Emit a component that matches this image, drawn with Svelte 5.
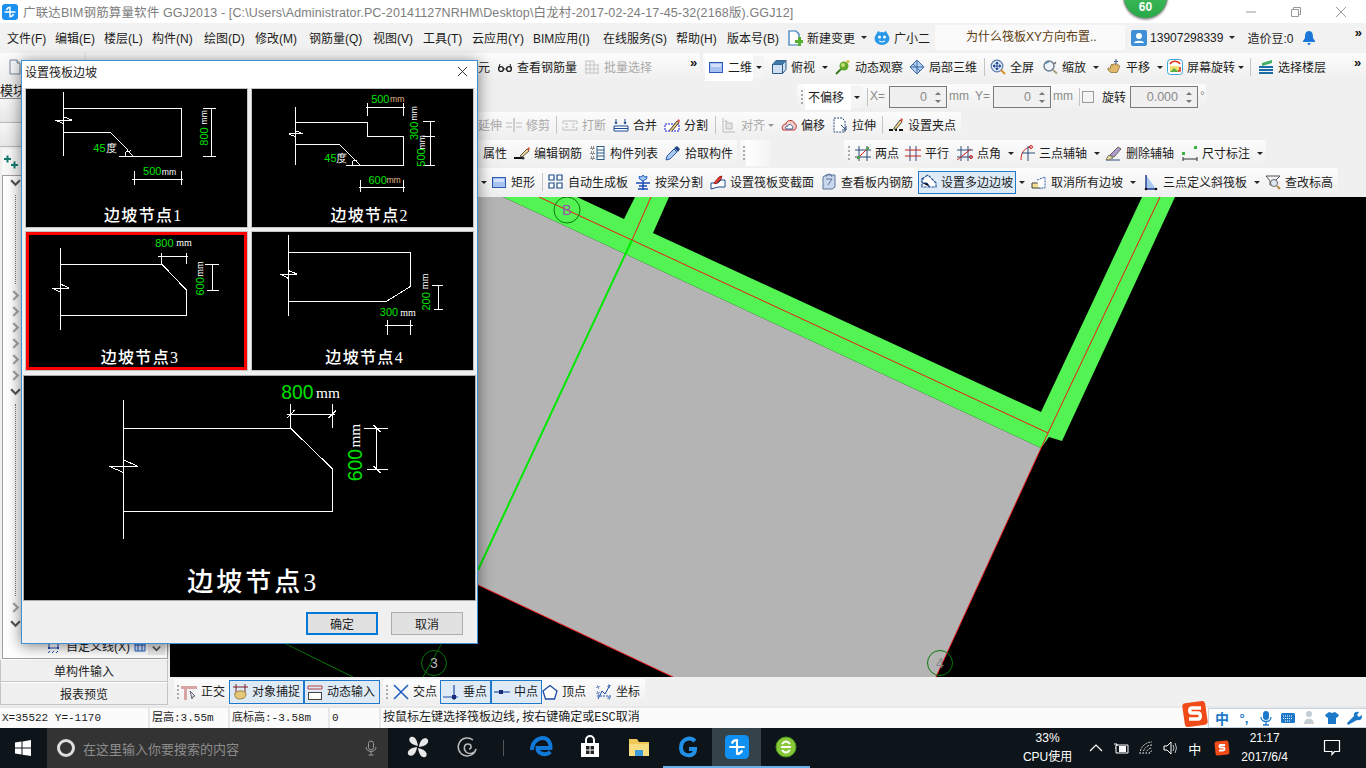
<script>
  const icons = {
    doc: `<path d="M3 1h7l3 3v11H3z" fill="#f6f8fb" stroke="#76859a"/><path d="M10 1v3h3" fill="#d8dfe9" stroke="#76859a"/>`,
    glasses: `<circle cx="4" cy="10" r="2.4" fill="none" stroke="#222" stroke-width="1.4"/><circle cx="12" cy="10" r="2.4" fill="none" stroke="#222" stroke-width="1.4"/><path d="M6.4 10h3.2M1.6 9.5 3 5M14.4 9.5 13 5" stroke="#222" fill="none"/>`,
    batch: `<path d="M1 2h9M1 6h14M1 10h14M1 14h14M2 2v12M6 2v12M10 2v12M14 6v8" stroke="#c4c4c4" fill="none"/>`,
    rect: `<rect x="1.5" y="3.5" width="13" height="10" fill="#a8c2f0" stroke="#2c5cb8"/><rect x="3" y="5" width="10" height="3" fill="#d5e2fa"/>`,
    cube: `<path d="M1.5 5.5 5 1.5h10v9l-3.500 4h-10z" fill="#cfe0f2" stroke="#2c5a88"/><path d="M1.500 5.500h10v9M11.500 5.500l3.500-4" fill="none" stroke="#2c5a88"/><path d="M1.500 5.500 5 1.500h10l-3.500 4z" fill="#3f78a8"/>`,
    orbit: `<circle cx="9" cy="7" r="4.500" fill="#5fa82c"/><circle cx="8" cy="6" r="2" fill="#c8e070"/><path d="M1 15 6 10" stroke="#3a7a20" stroke-width="2"/><circle cx="13" cy="2.500" r="1.500" fill="#d8c030"/>`,
    local: `<path d="M1 8 8 1l7 7-7 7z" fill="#b8d0f0" stroke="#3c6ca8"/><path d="M4 5l7 7M8 1v14M1 8h14" stroke="#3c6ca8"/>`,
    full: `<circle cx="7" cy="7" r="5.800" fill="#dce8f8" stroke="#5a7ca8" stroke-width="1.200"/><path d="M7 3v8M3 7h8M7 3 5.800 4.500h2.400zM7 11l-1.200-1.500h2.400zM3 7l1.500-1.200v2.400zM11 7 9.500 5.800v2.400z" stroke="#2c4c98" fill="#2c4c98"/><path d="m11 11 4 4" stroke="#d89020" stroke-width="2"/>`,
    zoom: `<circle cx="7" cy="7" r="5" fill="#eef2f8" stroke="#6a7a8c" stroke-width="1.400"/><path d="M4 5a3 3 0 0 1 3-2" stroke="#2c78c8" fill="none"/><path d="m11 11 4 3.500" stroke="#a8a080" stroke-width="2"/><circle cx="13" cy="4" r="1.200" fill="#888"/>`,
    pan: `<path d="M2 11c-1-2 1-3 2-1l1-4c.500-1.500 2-1 1.800.500l1-1.500c.800-1 2-.500 1.500.700l1.200-.700c1-.300 1.500.700 1 1.500l1-.300c1-.200 1.500.800 1 1.800-.600 2-1.500 4-2.500 5.500H5z" fill="#e0b868" stroke="#8c7040" stroke-width=".8"/><path d="M10 0v5M8 2.500h4" stroke="#3c5c88"/>`,
    rotate: `<rect x=".500" y=".500" width="15" height="15" rx="3" fill="#fff" stroke="#38a8d8"/><path d="M3 5a6 6 0 0 1 10 0" stroke="#e03020" stroke-width="1.600" fill="none"/><rect x="3" y="7" width="9" height="6" fill="#f0e070"/><path d="M3 13l4-4 5 4" fill="#58b048"/><path d="M13 8v4h-2" stroke="#e03020" stroke-width="1.600" fill="none"/>`,
    floors: `<path d="M4 4 14 1v3L4 7z" fill="#3cb060"/><path d="M1 8h14M1 11h14M1 14h14" stroke="#1c6ca8" stroke-width="2"/>`,
    trim: `<path d="M0 6h6M0 10h6M10 6h6M10 10h6" stroke="#bbb"/><path d="M7 1h2v14H7z" fill="#ccc"/>`,
    brk: `<path d="M1 4h14M1 13h14M1 4v3M15 4v3M1 10v3M15 10v3" stroke="#bdbdbd"/><path d="M3 7h3M10 7h3M3 10h3M10 10h3" stroke="#bdbdbd"/>`,
    merge: `<path d="M1 9h14v5H1z" fill="#fff" stroke="#1c4c98"/><path d="M1 11.500h14" stroke="#1c4c98"/><path d="M3 2v4M2 5l1 2 1-2M12 2v4M11 5l1 2 1-2" stroke="#1c4c98" fill="#1c4c98"/>`,
    split: `<rect x="1" y="7" width="14" height="7" fill="#fff" stroke="#1818e0" stroke-dasharray="2 1"/><path d="m5 14 8-10 2 1.500L8 14" fill="#e8c878" stroke="#444"/><path d="m13 4 1.500-2L16 3.500 15 5.500z" fill="#d85040"/>`,
    align: `<path d="M2 1v14h12" stroke="#bbb" fill="none"/><path d="M5 6h6v6H5z" fill="#e4e4e4" stroke="#bbb"/><path d="M5 3 3 5h4z" fill="#bbb"/>`,
    offset: `<path d="M2 13c-2-3 0-6 3-6 0-4 7-5 8-1 3 0 3 7 0 7z" fill="#f4d0c8" stroke="#c03030"/><path d="M5 12c-1-2 0-3 2-3 0-2 3-2 4 0 1 0 1 3 0 3z" fill="#fff" stroke="#2c5ca8"/>`,
    stretch: `<path d="M2 1h8l3 3v11H2z" fill="#fff" stroke="#2c4c78" stroke-dasharray="2 1"/><path d="M9 8l5 5M10 13h4v-4" stroke="#2c4c78" fill="none"/>`,
    grip: `<path d="M1 13h4M7 13h2M11 13h4" stroke="#111" stroke-width="2"/><path d="m6 11 6-8 2 2-6 7-2 .500z" fill="#f0d080" stroke="#555"/><path d="m12 3 1.500-2L15 2.500 14 5z" fill="#d85040"/>`,
    editbar: `<path d="M0 13h9" stroke="#111" stroke-width="2"/><circle cx="9" cy="13" r="1.500" fill="#333"/><path d="m6 11 7-7 2 2-7 6z" fill="#f0d890" stroke="#555"/><path d="m13 4 1.500-2L16 3.500 15 6z" fill="#d06040"/>`,
    list: `<path d="M1 2h3v2H1zM1 7h3v2H1zM1 12h3v2H1z" fill="none" stroke="#222" stroke-dasharray="1 1"/><rect x="7" y="1.500" width="7" height="13" fill="#fff" stroke="#2c5c88"/><path d="M7 5h7M7 8h7M7 11h7" stroke="#2c5c88"/>`,
    pipette: `<path d="M1 15l1-4 7-7 3 3-7 7z" fill="#a8c8f0" stroke="#2c5ca8"/><path d="m9 3 3-2 3 3-2 3z" fill="#204880"/>`,
    twop: `<path d="M4 1v15M12 1v15M0 5h16M0 12h16" stroke="#2c4c78"/><path d="m2 14 12-12" stroke="#d02020"/><circle cx="3.500" cy="12.500" r="1.500" fill="#3cb040"/><circle cx="12.500" cy="3.500" r="1.500" fill="#3cb040"/>`,
    para: `<path d="M5 1v15M11 1v15" stroke="#2c4c88"/><path d="M0 5h16M0 11h16" stroke="#d02020"/>`,
    pangle: `<path d="M4 1v15M11 1v15M0 5h16M0 12h16" stroke="#2c4c78"/><path d="m0 15 14-11" stroke="#d02020"/><circle cx="14" cy="12" r="1.500" fill="none" stroke="#d02020"/>`,
    threep: `<path d="M2 15c0-7 3-12 10-13" stroke="#d02020" fill="none"/><circle cx="12" cy="2" r="1.500" fill="none" stroke="#d02020"/><path d="M9 1v15M3 8h13" stroke="#2c4c78"/>`,
    erase: `<path d="M0 15h14" stroke="#2c4c78"/><path d="m4 10 8-8 3 2-7 8z" fill="#b09ad0" stroke="#665"/><path d="m3 10 4 3-4 2-3-.500z" fill="#e8d8a0" stroke="#776"/>`,
    dim: `<path d="M1 12v4M15 12v4M1 14h14" stroke="#333"/><rect x="0" y="7" width="3" height="3" fill="#3cb040"/><rect x="12" y="1" width="3" height="3" fill="#3cb040"/>`,
    auto: `<path d="M1 1h5v5H1zM9 1h5v5H9zM1 9h5v5H1zM9 9h5v5H9z" fill="#fff" stroke="#1c4c88" stroke-width="1.200"/>`,
    beam: `<path d="M8 1l1.500 2 2.500-.500-.500 2.500L8 7 4.500 5 4 2.500 6.500 3z" fill="#a8c8f0" stroke="#1c5cc8"/><path d="M1 9h14M8 7v9M4 12h8M3 15h10" stroke="#1c4cb8" stroke-width="1.500"/>`,
    section: `<path d="M1 9h7l3-3h4v7H8l-7 2z" fill="#fff" stroke="#1c4c88"/><path d="m4 9 5-6 3-1-1 3-5 5z" fill="#e04030" stroke="#a02020"/>`,
    inrebar: `<path d="M2 3 5 1h9v12l-3 2H2z" fill="#c8d8ee" stroke="#5a7498"/><path d="M5 5h6l-4 6" fill="none" stroke="#5a7498"/><path d="M5 3a3 3 0 0 1 6 0" stroke="#5a7498" fill="none"/>`,
    polyslope: `<path d="M1 13V5l6-4 8 8v4z" fill="#fff" stroke="#1c4c98" stroke-width="1.200" stroke-dasharray="3 1"/><path d="M1 9h5l3 4M0 5h3" stroke="#1c4c98"/>`,
    cancel: `<path d="M1 9h9v5H1z" fill="#f4e090" stroke="#444"/><path d="M6 6l8-3v11H8" fill="#fff" stroke="#2c5ca8" stroke-dasharray="2 1"/>`,
    slope: `<path d="M3 1v14h10z" fill="#a8c8f0"/><path d="M3 1v14h10" stroke="#1c3c88" stroke-width="1.400" fill="none"/><circle cx="3" cy="15" r="1.300" fill="#111"/><circle cx="13" cy="15" r="1.300" fill="#111"/>`,
    elev: `<path d="M1 2h14l-5 5v4H5V7z" fill="#f0f2f4" stroke="#555"/><circle cx="9" cy="9" r="3.500" fill="#dce8f4" stroke="#666"/><path d="m12 12 3 3" stroke="#b08a40" stroke-width="2"/>`,
    ortho: `<path d="M0 2h16v3H0z" fill="#d8a4a4"/><path d="M3 5h3v11H3z" fill="#d8a4a4"/><path d="m9 7 5 5-2 .500-1 2.500z" fill="#dde" stroke="#667"/>`,
    snap: `<path d="M4 0v9M13 0v9M1 3h15" stroke="#7a2020"/><path d="M3 9c3-3 10-3 11 1 0 4-3 5-7 5-3 0-5-3-4-6z" fill="#e4c878" stroke="#9a8040"/>`,
    dyn: `<path d="M1 2h14M1 5h14M1 2v3M15 2v3" stroke="#b04040"/><rect x="1.500" y="8.500" width="13" height="7" fill="#fff" stroke="#444"/>`,
    cross: `<path d="m1 1 14 14M15 1 1 15" stroke="#1c5cc0" stroke-width="1.500"/>`,
    perp: `<path d="M0 13h15M11 1v15" stroke="#1c4ca8" stroke-width="1.200"/><rect x="9" y="11" width="4" height="4" fill="#1c2c78"/>`,
    mid: `<path d="M0 8h16" stroke="#1c4ca8" stroke-width="1.200"/><rect x="5" y="6" width="4" height="4" fill="#1c2c78"/>`,
    vertex: `<path d="M8 1.500 15 7l-2.500 8h-9L1 7z" fill="#fff" stroke="#1c4ca8" stroke-width="1.300"/>`,
    coord: `<path d="M2 15l4-8 3 3 5-9" stroke="#1c4ca8" fill="none"/><path d="M1 2h2v2H1zM12 13h2v2h-2zM1 8h2v2H1zM12 1h2v2h-2z" stroke="#1c4ca8" fill="none" stroke-dasharray="1 1"/><path d="M1 12h14" stroke="#1c4ca8" stroke-dasharray="2 1"/>`,
    newchg: `<path d="M2 1h7l3 3v11H2z" fill="#fff" stroke="#2c78b8" stroke-width="1.200"/><path d="M8 10h3V7h3v3h2v3h-2v3h-3v-3H8z" fill="#58b030"/>`,
    xiao: `<ellipse cx="8" cy="8.500" rx="7.500" ry="6.500" fill="#2898e8"/><path d="M5 1.500 3 5M11 1.500l2 3.500" stroke="#2898e8" stroke-width="2"/><circle cx="5.500" cy="7" r="1.500" fill="#fff"/><circle cx="10.500" cy="7" r="1.500" fill="#fff"/><path d="M5 11q3 2 6 0" stroke="#fff" fill="none"/>`,
    user: `<rect width="16" height="16" rx="2" fill="#3f8fd6"/><circle cx="8" cy="6" r="3" fill="#fff"/><path d="M3 13c0-3 10-3 10 0z" fill="#fff"/>`,
    bell: `<path d="M8 1c4 0 4 4 4 7l2 3v1H2v-1l2-3c0-3 0-7 4-7z" fill="#1c78d8"/><path d="M6 13h4l-2 2.500z" fill="#1c78d8"/>`,
  };

  // x = where the item starts on the page, width runs up to the next item
  const row1 = [
    { x: 0, end: 84, items: [{ x: 7, icon: "doc" }] },
    { x: 86, end: 700, items: [
      { x: 478, t: "元" }, { x: 497, icon: "glasses", t: "查看钢筋量" }, { x: 584, icon: "batch", t: "批量选择", off: true },
      { x: 690, more: true },
    ] },
    { x: 703, end: 1366, items: [
      { x: 705, icon: "rect", t: "二维", white: true }, { x: 753, ddbox: true },
      { x: 771, icon: "cube", t: "俯视", dd: true }, { x: 835, icon: "orbit", t: "动态观察" }, { x: 909, icon: "local", t: "局部三维" },
      { x: 984, sep: true }, { x: 990, icon: "full", t: "全屏" }, { x: 1042, icon: "zoom", t: "缩放", dd: true },
      { x: 1106, icon: "pan", t: "平移", dd: true }, { x: 1167, icon: "rotate", t: "屏幕旋转", dd: true, tight: true },
      { x: 1250, sep: true }, { x: 1258, icon: "floors", t: "选择楼层" }, { x: 1354, more: true },
    ] },
  ];
  const row2 = [
    { x: 797, end: 1206, items: [
      { x: 799, grip: true }, { x: 805, t: "不偏移", white: true }, { x: 851, ddbox: true }, { x: 867, sep: true },
      { x: 870, t: "X=", dim: true }, { x: 889, num: "0", w: 58 }, { x: 949, t: "mm", dim: true }, { x: 975, t: "Y=", dim: true },
      { x: 993, num: "0", w: 58 }, { x: 1053, t: "mm", dim: true }, { x: 1079, sep: true }, { x: 1082, check: true },
      { x: 1102, t: "旋转" }, { x: 1130, num: "0.000", w: 67 }, { x: 1200, t: "°", dim: true },
    ] },
  ];
  const row3 = [
    { x: 478, end: 961, items: [
      { x: 478, t: "延伸", off: true }, { x: 506, icon: "trim", t: "修剪", off: true }, { x: 556, sep: true },
      { x: 562, icon: "brk", t: "打断", off: true }, { x: 613, icon: "merge", t: "合并" }, { x: 664, icon: "split", t: "分割" },
      { x: 715, sep: true }, { x: 721, icon: "align", t: "对齐", off: true, dd: true, tight: true }, { x: 781, icon: "offset", t: "偏移" },
      { x: 832, icon: "stretch", t: "拉伸" }, { x: 882, sep: true }, { x: 888, icon: "grip", t: "设置夹点" },
    ] },
  ];
  const row4 = [
    { x: 478, end: 737, items: [
      { x: 483, t: "属性" }, { x: 514, icon: "editbar", t: "编辑钢筋" }, { x: 590, icon: "list", t: "构件列表" }, { x: 665, icon: "pipette", t: "拾取构件" },
    ] },
    { x: 740, end: 770, items: [{ x: 741, grip: true }, { x: 746, blank: true }] },
    { x: 844, end: 1266, items: [
      { x: 846, grip: true }, { x: 855, icon: "twop", t: "两点" }, { x: 905, icon: "para", t: "平行" }, { x: 957, icon: "pangle", t: "点角", dd: true },
      { x: 1019, icon: "threep", t: "三点辅轴", dd: true }, { x: 1106, icon: "erase", t: "删除辅轴" }, { x: 1182, icon: "dim", t: "尺寸标注", dd: true },
    ] },
  ];
  const row5 = [
    { x: 478, end: 1338, items: [
      { x: 478, ddbox: true, bare: true }, { x: 491, icon: "rect", t: "矩形" }, { x: 542, sep: true }, { x: 548, icon: "auto", t: "自动生成板" },
      { x: 635, icon: "beam", t: "按梁分割" }, { x: 710, icon: "section", t: "设置筏板变截面" }, { x: 821, icon: "inrebar", t: "查看板内钢筋" },
      { x: 918, icon: "polyslope", t: "设置多边边坡", on: true }, { x: 1016, ddbox: true, bare: true },
      { x: 1031, icon: "cancel", t: "取消所有边坡", dd: true }, { x: 1143, icon: "slope", t: "三点定义斜筏板", dd: true }, { x: 1265, icon: "elev", t: "查改标高" },
    ] },
  ];
  const row6 = [
    { x: 174, end: 380, items: [
      { x: 175, grip: true }, { x: 181, icon: "ortho", t: "正交" }, { x: 229, icon: "snap", t: "对象捕捉", on: true }, { x: 304, icon: "dyn", t: "动态输入", on: true },
    ] },
    { x: 383, end: 645, items: [
      { x: 384, grip: true }, { x: 393, icon: "cross", t: "交点" }, { x: 440, icon: "perp", t: "垂点", on: true }, { x: 491, icon: "mid", t: "中点", on: true },
      { x: 542, icon: "vertex", t: "顶点" }, { x: 596, icon: "coord", t: "坐标" },
    ] },
  ];

  // turns page coordinates into the margins and widths the flex rows need
  function place(chips, origin) {
    let prev = origin;
    return chips.map((c) => {
      const out = {
        ml: c.x - prev,
        w: c.end - c.x,
        pad: c.items[0].x - c.x,
        items: c.items.map((it, i) => ({ ...it, w: (c.items[i + 1] ? c.items[i + 1].x : c.end) - it.x })),
      };
      prev = c.end;
      return out;
    });
  }

  const menu = [
    ["文件(F)", 48], ["编辑(E)", 49], ["楼层(L)", 48], ["构件(N)", 52], ["绘图(D)", 51], ["修改(M)", 54], ["钢筋量(Q)", 64],
    ["视图(V)", 50], ["工具(T)", 49], ["云应用(Y)", 61], ["BIM应用(I)", 70], ["在线服务(S)", 73], ["帮助(H)", 51], ["版本号(B)", 60],
  ];

  // diagrams use the 3x pixel numbers of the dialog, scaled down by viewBox
  const G = "#00e000";
  const W = "#fff";
  const thumbs = [
    {
      vb: "18 12 663 415",
      lines: ["130,22 130,212", "130,70 485,70 485,214 298,214", "130,142 272,142 340,214", "130,97 155,106 105,106 130,116", "548,70 588,70", "548,214 588,214", "574,70 574,214", "343,258 343,302", "485,258 485,302", "335,284 490,284", "315,214 318,200 332,198"],
      texts: [
        { x: 553, y: 155, t: "800", c: G, s: 33, r: 1 }, { x: 553, y: 97, t: "mm", c: W, s: 26, r: 1 },
        { x: 238, y: 190, t: "45", c: G, s: 33 }, { x: 275, y: 190, t: "度", c: W, s: 33 },
        { x: 397, y: 258, t: "500", c: G, s: 33 }, { x: 447, y: 262, t: "mm", c: W, s: 26 },
      ],
      cap: { x: 370, y: 392, t: "边坡节点1" },
    },
    {
      vb: "695 12 663 415",
      lines: ["826,66 826,240", "826,112 1043,112 1043,155 1151,155 1151,241 978,241", "826,178 956,178 1020,241", "826,138 848,147 805,147 826,156", "1042,55 1042,92", "1151,55 1151,92", "1036,67 1155,67", "1207,111 1245,111", "1207,155 1245,155", "1207,241 1245,241", "1232,111 1232,241", "1021,285 1021,322", "1151,285 1151,322", "1016,307 1155,307", "995,241 998,228 1010,226"],
      texts: [
        { x: 1080, y: 42, t: "500", c: G, s: 33 }, { x: 1131, y: 43, t: "mm", c: "#e0b080", s: 26 },
        { x: 1180, y: 138, t: "300", c: G, s: 33, r: 1 }, { x: 1180, y: 85, t: "mm", c: W, s: 26, r: 1 },
        { x: 1203, y: 218, t: "500", c: G, s: 33, r: 1 }, { x: 1206, y: 172, t: "mm", c: W, s: 26, r: 1 },
        { x: 930, y: 220, t: "45", c: G, s: 33 }, { x: 962, y: 220, t: "度", c: W, s: 33 },
        { x: 1072, y: 285, t: "600", c: G, s: 33 }, { x: 1120, y: 286, t: "mm", c: "#e0b080", s: 26 },
      ],
      cap: { x: 1048, y: 392, t: "边坡节点2" },
    },
    {
      vb: "18 442 663 414",
      sel: true,
      lines: ["121,490 121,737", "121,538 425,538 498,615 498,691 121,691", "121,598 148,610 97,610 121,622", "425,505 425,538", "500,505 500,538", "415,515 503,515", "555,538 597,538", "560,617 597,617", "578,538 578,617"],
      texts: [
        { x: 433, y: 475, t: "800", c: G, s: 33 }, { x: 492, y: 475, t: "mm", c: W, s: 30, f: 1 },
        { x: 539, y: 605, t: "600", c: G, s: 33, r: 1 }, { x: 539, y: 553, t: "mm", c: W, s: 30, r: 1, f: 1 },
      ],
      cap: { x: 360, y: 819, t: "边坡节点3" },
    },
    {
      vb: "695 442 663 414",
      lines: ["805,450 805,695", "805,502 1171,502 1171,605 1100,649 805,649", "805,558 830,568 780,568 805,582", "1100,705 1100,750", "1171,705 1171,750", "1095,721 1178,721", "1234,601 1268,601", "1240,675 1268,675", "1253,601 1253,675"],
      texts: [
        { x: 1106, y: 683, t: "300", c: G, s: 33 }, { x: 1163, y: 683, t: "mm", c: W, s: 30, f: 1 },
        { x: 1216, y: 650, t: "200", c: G, s: 33, r: 1 }, { x: 1214, y: 590, t: "mm", c: W, s: 30, r: 1, f: 1 },
      ],
      cap: { x: 1033, y: 819, t: "边坡节点4" },
    },
  ];
  const preview = {
    vb: "72 18 1353 672",
    big: true,
    lines: ["371,90 371,506", "371,175 872,175 998,297 998,424 371,424", "372,270 413,289 328,289 371,308", "871,103 871,175", "998,103 998,175", "860,132 1005,132", "860,145 884,120", "985,145 1008,122", "1092,175 1163,175", "1101,298 1163,298", "1130,175 1130,298", "1120,165 1142,187", "1120,288 1142,310"],
    texts: [
      { x: 892, y: 66, t: "800", c: G, s: 58 }, { x: 984, y: 66, t: "mm", c: W, s: 46, f: 1 },
      { x: 1065, y: 285, t: "600", c: G, s: 58, r: 1 }, { x: 1065, y: 197, t: "mm", c: W, s: 46, r: 1, f: 1 },
    ],
    cap: { x: 760, y: 637, t: "边坡节点3" },
  };

  const tree = [
    { k: "down" }, { k: "dots", h: 89 }, { k: "right" }, { k: "right" }, { k: "right" }, { k: "right" }, { k: "right" }, { k: "right" },
    { k: "down" }, { k: "dots", h: 192 }, { k: "right" }, { k: "down" },
  ];
</script>

{#snippet chips(rows)}
  {#each rows as c}
    <div class="chip" style="margin-left:{c.ml}px;width:{c.w}px;padding-left:{c.pad}px">
      {#each c.items as it}
        <div
          class="it"
          class:on={it.on}
          class:off={it.off}
          class:white={it.white}
          class:dimtext={it.dim}
          style="width:{it.w}px"
        >
          {#if it.sep}
            <i class="sep"></i>
          {:else if it.grip}
            <i class="gripper"></i>
          {:else if it.more}
            <span class="more">»</span>
          {:else if it.ddbox}
            <span class="ddbox" class:bare={it.bare}><i class="tri"></i></span>
          {:else if it.blank}
            <span class="blank"></span>
          {:else if it.check}
            <span class="check"></span>
          {:else if it.num}
            <span class="num" style="width:{it.w - 2}px">
              <span class="val">{it.num}</span>
              <span class="spin"><i class="up"></i><i class="tri"></i></span>
            </span>
          {:else}
            {#if it.icon}
              <svg class="ico" viewBox="0 0 16 16">{@html icons[it.icon]}</svg>
            {/if}
            {#if it.t}<span class="lbl">{it.t}</span>{/if}
            {#if it.dd}<i class="tri" class:tight={it.tight}></i>{/if}
          {/if}
        </div>
      {/each}
    </div>
  {/each}
{/snippet}

{#snippet drawing(d)}
  <svg class="draw" viewBox={d.vb}>
    {#each d.lines as pts}
      <polyline points={pts} />
    {/each}
    {#each d.texts as x}
      <text
        x={x.x}
        y={x.y}
        fill={x.c}
        font-size={x.s}
        class:serif={x.f}
        transform={x.r ? `rotate(-90 ${x.x} ${x.y})` : undefined}>{x.t}</text>
    {/each}
    <text class="cap" class:big={d.big} x={d.cap.x} y={d.cap.y}>{d.cap.t}</text>
  </svg>
{/snippet}

<div class="app">
  <header class="title">
    <svg class="logo" viewBox="0 0 16 16">
      <rect width="16" height="16" rx="3" fill="#1c90f0" />
      <path d="M8 2.500v11M2.500 8h11M4.500 6a3.500 3.500 0 0 1 3.500-2.500M11.500 10a3.500 3.500 0 0 1-3.500 2.500" stroke="#fff" stroke-width="1.400" fill="none" />
    </svg>
    <span class="title-text">广联达BIM钢筋算量软件 GGJ2013 - [C:\Users\Administrator.PC-20141127NRHM\Desktop\白龙村-2017-02-24-17-45-32(2168版).GGJ12]</span>
    <div class="winbtns">
      <svg viewBox="0 0 12 12"><path d="M1 6h10" stroke="#999" /></svg>
      <svg viewBox="0 0 12 12"><path d="M1.500 3.500h7v7h-7zM3.500 3.500v-2h7v7h-2" stroke="#999" fill="none" /></svg>
      <svg viewBox="0 0 12 12"><path d="m1 1 10 10M11 1 1 11" stroke="#999" /></svg>
    </div>
  </header>

  <nav class="menu">
    {#each menu as [label, w]}
      <span class="m" style="width:{w}px">{label}</span>
    {/each}
    <svg class="ico" viewBox="0 0 16 16">{@html icons.newchg}</svg>
    <span class="m newchg">新建变更</span><i class="tri"></i>
    <svg class="ico xiao" viewBox="0 0 16 16">{@html icons.xiao}</svg>
    <span class="m xiao-t">广小二</span>
    <span class="tip">为什么筏板XY方向布置..</span>
    <svg class="ico user" viewBox="0 0 16 16">{@html icons.user}</svg>
    <span class="m phone">13907298339</span><i class="tri"></i>
    <span class="m beans">造价豆:0</span>
    <svg class="ico bell" viewBox="0 0 16 16">{@html icons.bell}</svg>
    <span class="more menu-more">»</span>
  </nav>

  <div class="tb tb1">{@render chips(place(row1, 0))}</div>

  <div class="body">
    <aside class="side">
      <div class="mod">模块导航栏</div>
      <div class="sidebtn"></div>
      <div class="sidebtn"></div>
      <div class="tab">
        <svg viewBox="0 0 16 16"><path d="M1 5h7M4.500 1.500v7M8 11h7M11.500 7.500v7" stroke="#157a70" stroke-width="2" /></svg>
      </div>
      <div class="tree">
        {#each tree as n}
          {#if n.k === "dots"}
            <i class="dots" style="height:{n.h}px"></i>
          {:else}
            <svg class="chev" class:grey={n.k === "right"} viewBox="0 0 10 10">
              <path d={n.k === "right" ? "M3 1l4 4-4 4" : "M1 3l4 4 4-4"} fill="none" stroke-width="2" />
            </svg>
          {/if}
        {/each}
        <div class="leaf">
          <svg class="leaf-ico" viewBox="0 0 16 16"><path d="M3 1v9h9V1" fill="none" stroke="#1c4cb8" /><path d="M2 9h2v2H2zM11 9h2v2h-2z" fill="#1c4cb8" /><path d="M2 15l2-2M6 15l2-2M10 15l2-2" stroke="#1c4cb8" /></svg>
          <span>自定义线(X)</span>
          <svg class="grid" viewBox="0 0 12 12"><path d="M1 1h10v10H1zM4 1v10M8 1v10M1 5h10" fill="#dbe8fa" stroke="#1c5cc8" /></svg>
          <span class="leaf-btn"><svg class="chev" viewBox="0 0 10 10"><path d="M1 3l4 4 4-4" fill="none" stroke-width="2" /></svg></span>
        </div>
      </div>
      <button class="sidefoot">单构件输入</button>
      <button class="sidefoot">报表预览</button>
    </aside>

    <section class="work">
      <div class="tb tb2">{@render chips(place(row2, 170))}</div>
      <div class="tb tb3">{@render chips(place(row3, 170))}</div>
      <div class="tb tb3">{@render chips(place(row4, 170))}</div>
      <div class="tb tb5">{@render chips(place(row5, 170))}</div>

      <svg class="canvas" viewBox="170 197 1196 480">
        <polygon points="478,197 503,197 1041,448 936,677 673,677 478,585" fill="#b4b4b4" />
        <polygon points="503,197 1041,448 1049,437 1062,441 1175,197 1142,197 1041,412 653,233 669,197 635,197 624,219 577,197" fill="#52f352" />
        <path d="M539 197 1048 433 1160 197M651 197 632 240M1048 433 936 677M478 585 673 677" stroke="#f01818" fill="none" />
        <path d="M632 240 478 570" stroke="#00e800" stroke-width="2" />
        <path d="M284 643 353 677M442 643 423 677" stroke="#087a08" />
        <circle cx="567" cy="210" r="13" fill="none" stroke="#087a08" />
        <circle cx="434" cy="663" r="12.500" fill="none" stroke="#087a08" />
        <circle cx="940" cy="663" r="12.500" fill="none" stroke="#087a08" />
        <text class="axis" x="567" y="215" fill="#a050b0">B</text>
        <text class="axis" x="434" y="668" fill="#b8b8b8">3</text>
        <text class="axis" x="940" y="668" fill="#888">4</text>
      </svg>

      <div class="tb tb6">{@render chips(place(row6, 170))}</div>
    </section>
  </div>

  <footer class="status">
    <span class="cell c1">X=35522 Y=-1170</span>
    <span class="cell c2">层高:3.55m</span>
    <span class="cell c3">底标高:-3.58m</span>
    <span class="cell c4">0</span>
    <span class="cell c5">按鼠标左键选择筏板边线,按右键确定或ESC取消</span>
  </footer>

  <div class="taskbar">
    <svg class="win" viewBox="0 0 16 16"><path d="M0 2.500 6.500 1.600v6H0zM7.500 1.500 16 0v7.600H7.500zM0 8.400h6.500v6L0 13.500zM7.500 8.400H16V16l-8.500-1.300z" fill="#fff" /></svg>
    <div class="search">
      <i class="cortana"></i>
      <span>在这里输入你要搜索的内容</span>
      <svg viewBox="0 0 16 16"><rect x="5.500" y="1" width="5" height="9" rx="2.500" fill="none" stroke="#999" /><path d="M3 7c0 6 10 6 10 0M8 12v3M5.500 15h5" fill="none" stroke="#999" /></svg>
    </div>
    <div class="task">
      <svg viewBox="0 0 24 24"><path d="M12 11C11 4 8 1 5 2S2 9 12 11zM13 12c7-1 10-4 9-7s-8-3-9 7zM12 13c1 7 4 10 7 9s3-7-7-9zM11 12c-7 1-10 4-9 7s8 3 9-7z" fill="#e8e8e8" /></svg>
    </div>
    <div class="task">
      <svg viewBox="0 0 24 24"><path d="M18 5a9 9 0 1 0 3 9c-.600 4-7 6-10 3s-2-8 2-8 4 5 1 5" fill="none" stroke="#bbb" stroke-width="1.500" /></svg>
    </div>
    <i class="tasksep"></i>
    <div class="task">
      <svg viewBox="0 0 24 24"><path d="M3 15C3 7 9 3 14 3c5 0 8 5 7.500 10H8.500c0 6 8 8 13 4" fill="none" stroke="#1078d8" stroke-width="4" /></svg>
    </div>
    <div class="task">
      <svg viewBox="0 0 24 24"><path d="M3 8h18v14H3z" fill="#fff" /><path d="M8 8V5a4 4 0 0 1 8 0v3" fill="none" stroke="#fff" stroke-width="2" /><path d="M8 11h3.500v3.500H8zM12.500 11H16v3.500h-3.500zM8 15.500h3.500V19H8zM12.500 15.500H16V19h-3.500z" fill="#222" /></svg>
    </div>
    <div class="task">
      <svg viewBox="0 0 24 24"><path d="M2 4h8l2 3h10v14H2z" fill="#f0c858" /><path d="M2 9h20v12H2z" fill="#f8dc80" /><path d="M8 15h8v6H8z" fill="#3c9ad8" /></svg>
    </div>
    <div class="task open">
      <svg viewBox="0 0 24 24"><path d="M19 6C14 1 5 4 5 13c0 6 6 8 10 7 3-1 4-3 4-6h-6" fill="none" stroke="#2090e8" stroke-width="4" /></svg>
    </div>
    <div class="task open active">
      <svg viewBox="0 0 28 28"><rect width="28" height="28" rx="5" fill="#1090f0" /><path d="M14 5v18M5 14h18M8 10a6 6 0 0 1 6-4M20 18a6 6 0 0 1-6 4" stroke="#fff" stroke-width="2.500" fill="none" /></svg>
    </div>
    <div class="task open">
      <svg viewBox="0 0 24 24"><circle cx="12" cy="12" r="10" fill="#88c838" stroke="#4a9820" /><path d="M7 12h10M8 9q4-5 8 0M8 15q4 5 8 0" stroke="#fff" stroke-width="2" fill="none" /></svg>
    </div>

    <div class="tray">
      <div class="cpu"><span>33%</span><span>CPU使用</span></div>
      <svg class="t" viewBox="0 0 16 16"><path d="m2 11 6-6 6 6" fill="none" stroke="#fff" stroke-width="1.200" /></svg>
      <svg class="t" viewBox="0 0 16 16"><path d="M3 5h12v8H3zM1 4h3v2M2 8h1" fill="none" stroke="#fff" /><path d="M6 6h7v6H6z" fill="#fff" /></svg>
      <svg class="t" viewBox="0 0 16 16"><path d="M2 14a12 12 0 0 1 12-12M5 14a9 9 0 0 1 9-9M8 14a6 6 0 0 1 6-6M11 14a3 3 0 0 1 3-3" fill="none" stroke="#ddd" stroke-dasharray="2 1" /></svg>
      <svg class="t" viewBox="0 0 16 16"><path d="M1 6h3l4-4v12l-4-4H1z" fill="none" stroke="#fff" /><path d="M10 5q2 3 0 6M12 3q3 5 0 10" fill="none" stroke="#bbb" /></svg>
      <span class="ime">中</span>
      <svg class="t" viewBox="0 0 16 16"><rect x="1" y="1" width="14" height="14" rx="2" fill="#f04a18" transform="rotate(-6 8 8)" /><path d="M11 5H6.500c-1.500 0-1.500 2.500 0 2.500h3c1.500 0 1.500 3-.500 3H5" fill="none" stroke="#fff" stroke-width="1.800" /></svg>
      <div class="clock"><span>21:17</span><span>2017/6/4</span></div>
      <svg class="note" viewBox="0 0 18 18"><path d="M1.500 1.500h15v11h-5l-2.500 3v-3h-7.500z" fill="none" stroke="#fff" stroke-width="1.200" /></svg>
    </div>
  </div>

  <!-- overlays -->
  <div class="score"><b>60</b></div>

  <div class="sogou">
    <svg class="s-logo" viewBox="0 0 26 28"><rect x="1.500" y="2" width="23" height="24" rx="3" fill="#f04a18" transform="rotate(-8 13 14)" /><path d="M19 8H10c-3 0-3 5 0 5h6c3 0 3 6 0 6H7" fill="none" stroke="#fff" stroke-width="3.500" /></svg>
    <div class="s-bar">
      <span class="s-zh">中</span>
      <span class="s-p">°,</span>
      <svg viewBox="0 0 16 16"><rect x="5" y="1" width="6" height="9" rx="3" fill="#1c78c8" /><path d="M3 7c0 6 10 6 10 0M8 12v3M5 15h6" fill="none" stroke="#1c78c8" stroke-width="1.300" /></svg>
      <svg viewBox="0 0 16 16"><rect x="1" y="3" width="14" height="10" rx="1.500" fill="#1c78c8" /><path d="M3 6h10M3 8.500h10M5 11h6" stroke="#fff" stroke-dasharray="1 1" /></svg>
      <svg viewBox="0 0 16 16"><circle cx="7" cy="4" r="3" fill="#c4ccd4" /><path d="M2 14c0-7 10-7 10 0z" fill="#c4ccd4" /></svg>
      <svg viewBox="0 0 16 16"><path d="M5 2 1 5l2 3 1-1v7h8V7l1 1 2-3-4-3-3 1z" fill="#1c78c8" /></svg>
      <svg viewBox="0 0 16 16"><path d="m2 15-1-2 7-7c-1-3 2-5 5-4l-2 3 2 2 3-2c.500 4-2 6-5 5z" fill="#1c78c8" /></svg>
    </div>
  </div>

  <div class="dialog">
    <div class="dlg-title">
      <span>设置筏板边坡</span>
      <svg viewBox="0 0 12 12"><path d="m1 1 10 10M11 1 1 11" stroke="#222" /></svg>
    </div>
    <div class="thumbs">
      {#each thumbs as d}
        <div class="thumb" class:sel={d.sel}>{@render drawing(d)}</div>
      {/each}
    </div>
    <div class="preview">{@render drawing(preview)}</div>
    <div class="dlg-foot">
      <button class="btn primary">确定</button>
      <button class="btn">取消</button>
    </div>
  </div>
</div>

<style>
  :global(body) { margin: 0; background: #f0f0f0; }
  :global(#app) { font-family: "Liberation Sans", "Noto Sans CJK SC", sans-serif; font-size: 12px; color: #1c1c1c; }

  .app { position: relative; width: 1366px; height: 768px; overflow: hidden; display: flex; flex-direction: column; background: #f0f0f0; }

  .title { height: 23px; flex: none; background: #fff; display: flex; align-items: center; padding-left: 2px; }
  .logo { width: 16px; height: 16px; margin-right: 5px; }
  .title-text { color: #7d7d7d; font-size: 12.500px; letter-spacing: 0.130px; white-space: nowrap; }
  .winbtns { margin-left: auto; display: flex; gap: 33px; padding-right: 19px; }
  .winbtns svg { width: 12px; height: 12px; }

  .menu { height: 29px; flex: none; display: flex; align-items: center; padding-left: 7px; background: #f2f2f2; position: relative; }
  .m { flex: none; white-space: nowrap; }
  .ico { width: 16px; height: 16px; flex: none; overflow: visible; }
  .newchg { margin-left: 4px; }
  .menu .tri { margin-left: 6px; }
  .xiao { margin-left: 7px; }
  .xiao-t { margin-left: 4px; }
  .tip { margin-left: 5px; width: 190px; height: 25px; box-sizing: border-box; padding-left: 31px; line-height: 25px; background: #fafafa; color: #5c3c10; white-space: nowrap; }
  .user { margin-left: 6px; }
  .phone { margin-left: 3px; }
  .beans { margin-left: 12px; }
  .bell { margin-left: 8px; }
  .menu-more { margin-left: auto; margin-right: 4px; align-self: flex-start; }

  .tb { display: flex; flex: none; align-items: stretch; box-sizing: border-box; }
  .tb1 { height: 31px; padding: 1px 0 2px; }
  .tb2 { height: 29px; padding: 1px 0 2px; }
  .tb3 { height: 28px; padding: 0 0 2px; }
  .tb5 { height: 29px; padding: 0 0 1px; }
  .tb6 { height: 29px; padding: 2px 0; }

  .chip { box-sizing: border-box; display: flex; flex: none; align-items: center; border-radius: 2px; background: linear-gradient(#fcfcfc, #efefef); }
  .it { display: flex; align-items: center; gap: 4px; box-sizing: border-box; flex: none; height: 100%; white-space: nowrap; }
  .it.off { color: #a9a9a9; }
  .it.dimtext { color: #8a8a8a; }
  .it.white { background: #fff; padding-left: 3px; }
  .it.on { background: #deebf7; outline: 1.500px solid #1f78c8; outline-offset: -1.500px; padding-left: 3px; height: 24px; }
  .tb5 .it.on { height: 23px; }
  .lbl { margin-bottom: 2px; }

  .tri { display: inline-block; width: 0; height: 0; border: 3px solid transparent; border-top: 3px solid #222; border-bottom: 0; margin-left: 3px; flex: none; }
  .tri.tight { margin-left: -1px; }
  .off .tri { border-top-color: #999; }
  .sep { display: block; width: 1px; height: 18px; background: #c4c4c4; }
  .gripper { display: block; width: 2px; height: 14px; margin-left: 2px; background: repeating-linear-gradient(#aaa 0 2px, transparent 2px 4px); }
  .more { font-size: 13px; font-weight: 700; line-height: 1; color: #111; align-self: flex-start; margin-top: 3px; }
  .ddbox { display: flex; align-items: center; justify-content: center; width: 11px; height: 22px; background: #f4f4f4; }
  .ddbox .tri { margin: 0; }
  .ddbox.bare { background: none; }
  .blank { display: block; width: 24px; height: 100%; background: linear-gradient(90deg, #fff, #f4f4f4); }
  .check { display: block; width: 10px; height: 10px; border: 1px solid #9a9a9a; background: #f4f4f4; }
  .num { display: flex; align-items: center; box-sizing: border-box; height: 22px; border: 1.500px solid #7a7a7a; background: #f0f0f0; color: #8a8a8a; font-size: 12.500px; }
  .val { flex: 1; text-align: right; padding-right: 3px; }
  .spin { width: 16px; display: flex; flex-direction: column; align-items: center; gap: 5px; }
  .spin .tri { margin: 0; border-top-color: #777; }
  .spin .up { display: block; width: 0; height: 0; border: 3px solid transparent; border-bottom: 3px solid #777; border-top: 0; }

  .body { flex: 1; min-height: 0; display: flex; }
  .side { width: 170px; flex: none; box-sizing: border-box; padding: 0 2px 1px 0; display: flex; flex-direction: column; }
  .mod { height: 15px; flex: none; line-height: 15px; font-size: 13px; border-bottom: 1px solid #8c8c8c; white-space: nowrap; overflow: hidden; }
  .sidebtn { height: 23px; flex: none; background: linear-gradient(#f7f7f7, #e8e8e8); border-bottom: 1px solid #b8b8b8; }
  .tab { height: 26px; flex: none; margin: 2px 0 0 2px; background: #f8f8f8; }
  .tab svg { width: 16px; height: 16px; margin: 5px 0 0 1px; }
  .tree { flex: 1; min-height: 0; box-sizing: border-box; margin-left: 2px; border: 1px solid #a0a0a0; background: #fff; padding: 1px 0 3px 7px; display: flex; flex-direction: column; position: relative; }
  .chev { width: 11px; height: 11px; flex: none; stroke: #555; margin-bottom: 5px; }
  .chev.grey { stroke: #a8a8a8; }
  .dots { display: block; width: 0; margin: 2px 0 6px 5px; border-left: 1px dotted #777; }
  .leaf { margin-top: auto; display: flex; align-items: center; gap: 4px; height: 19px; padding-left: 36px; white-space: nowrap; }
  .leaf-ico { width: 16px; height: 16px; flex: none; }
  .leaf .grid { width: 12px; height: 12px; flex: none; }
  .leaf-btn { width: 17px; height: 13px; align-self: flex-end; margin-left: -2px; background: #eee; display: flex; align-items: center; justify-content: center; }
  .leaf-btn .chev { margin: 0; width: 9px; height: 9px; }
  .sidefoot { height: 23px; flex: none; border: 1px solid #c4c4c4; border-top-color: #fff; background: #f0f0f0; font: inherit; color: inherit; padding: 0; }

  .work { flex: 1; min-width: 0; display: flex; flex-direction: column; }
  .canvas { display: block; width: 1196px; height: 480px; flex: none; background: #000; }
  .axis { font-size: 14px; text-anchor: middle; font-family: "Liberation Sans", sans-serif; }

  .status { height: 22px; flex: none; display: flex; gap: 2px; box-sizing: border-box; padding-top: 2px; font-size: 11px; background: #e8e8e8; font-family: "Liberation Mono", "Noto Sans CJK SC", monospace; }
  .cell { background: #fbfbfb; padding: 2px; white-space: nowrap; line-height: 16px; box-sizing: border-box; }
  .c1 { width: 148px; }
  .c2 { width: 78px; }
  .c3 { width: 98px; }
  .c4 { width: 49px; }
  .c5 { flex: 1; font-size: 12px; }

  .taskbar { height: 40px; flex: none; display: flex; align-items: stretch; background: #0d151a; color: #fff; }
  .win { width: 16px; height: 16px; margin: 12px 14px 0 15px; flex: none; }
  .search { width: 341px; flex: none; margin: 0 5px 0 2px; box-sizing: border-box; background: #333; display: flex; align-items: center; padding: 0 9px 0 10px; color: #8c8c8c; font-size: 13px; }
  .search span { margin-left: 8px; }
  .search svg { width: 16px; height: 16px; margin-left: auto; }
  .cortana { display: block; width: 12px; height: 12px; border: 3px solid #ddd; border-radius: 50%; box-sizing: content-box; }
  .task { width: 49px; flex: none; display: flex; align-items: center; justify-content: center; box-sizing: border-box; padding-bottom: 2px; }
  .task svg { width: 24px; height: 24px; }
  .task.open { box-shadow: inset 0 -2px 0 #6ab0e8; }
  .task.active { background: #34424a; }
  .tasksep { display: block; width: 25px; height: 16px; margin-top: 12px; background: linear-gradient(#555, #555) center / 1px 100% no-repeat; flex: none; }

  .tray { margin-left: auto; display: flex; align-items: center; padding-right: 25px; font-size: 12px; }
  .cpu, .clock { display: flex; flex-direction: column; align-items: center; line-height: 19px; }
  .cpu { margin-right: 16px; }
  .t { width: 16px; height: 16px; margin-right: 9px; }
  .ime { margin: 0 13px 0 0; font-size: 13px; }
  .clock { margin: 0 35px 0 2px; }
  .note { width: 18px; height: 18px; }

  .score { position: absolute; left: 1123px; top: -26px; width: 45px; height: 45px; box-sizing: border-box; border-radius: 50%; background: linear-gradient(#4cc664, #28a848); border: 1px solid #8a8a8a; box-shadow: 0 1px 2px #999; display: flex; align-items: flex-end; justify-content: center; color: #fff; }
  .score b { font-size: 12px; margin-bottom: 5px; line-height: 1; }

  .sogou { position: absolute; left: 1182px; top: 700px; width: 184px; height: 28px; display: flex; align-items: flex-end; }
  .s-logo { width: 26px; height: 28px; flex: none; position: relative; z-index: 1; }
  .s-bar { flex: 1; height: 20px; box-sizing: border-box; background: #fff; border: 1px solid #c8d4e0; border-right: 0; display: flex; align-items: center; padding-left: 2px; color: #1c78c8; }
  .s-bar span { width: 22px; text-align: center; flex: none; }
  .s-bar svg { width: 16px; height: 16px; flex: none; padding: 0 3px; }
  .s-zh { font-size: 14px; font-weight: 700; }
  .s-p { font-size: 13px; font-weight: 700; }

  .dialog { position: absolute; left: 21px; top: 60px; width: 457px; height: 584px; box-sizing: border-box; border: 1px solid #3f8fd6; background: #f0f0f0; box-shadow: 0 2px 14px rgba(0, 0, 0, 0.5); display: flex; flex-direction: column; }
  .dlg-title { height: 27px; flex: none; box-sizing: border-box; background: #fff; display: flex; align-items: center; justify-content: space-between; padding: 0 9px 6px 3px; }
  .dlg-title svg { width: 11px; height: 11px; }
  .thumbs { display: grid; grid-template-columns: 221px 221px; grid-auto-rows: 138px; gap: 5px; padding: 1px 0 0 4px; }
  .thumb { background: #000; box-shadow: 0 0 0 1px #c4c4c4; }
  .thumb.sel { outline: 3px solid #ff0000; outline-offset: -3px; }
  .preview { width: 451px; height: 224px; margin: 6px 0 0 2px; background: #000; box-shadow: 0 0 0 1px #aaa; }
  .draw { display: block; width: 100%; height: 100%; }
  .draw polyline { fill: none; stroke: #fff; stroke-width: 3; shape-rendering: crispEdges; }
  .draw text { text-anchor: middle; dominant-baseline: central; font-family: "Liberation Sans", sans-serif; }
  .draw text.serif { font-family: "Liberation Serif", serif; }
  .draw .cap { fill: #fff; font-family: "Liberation Serif", "Noto Sans CJK SC", serif; font-weight: 500; font-size: 48px; letter-spacing: 4px; }
  .draw .cap.big { font-size: 78px; letter-spacing: 9px; }
  .dlg-foot { flex: 1; display: flex; justify-content: flex-end; gap: 13px; padding: 12px 14px 0 0; }
  .btn { width: 72px; height: 23px; box-sizing: border-box; border: 1px solid #adadad; background: #e1e1e1; font: inherit; color: inherit; padding: 0; }
  .btn.primary { border: 2px solid #0078d7; }
</style>
